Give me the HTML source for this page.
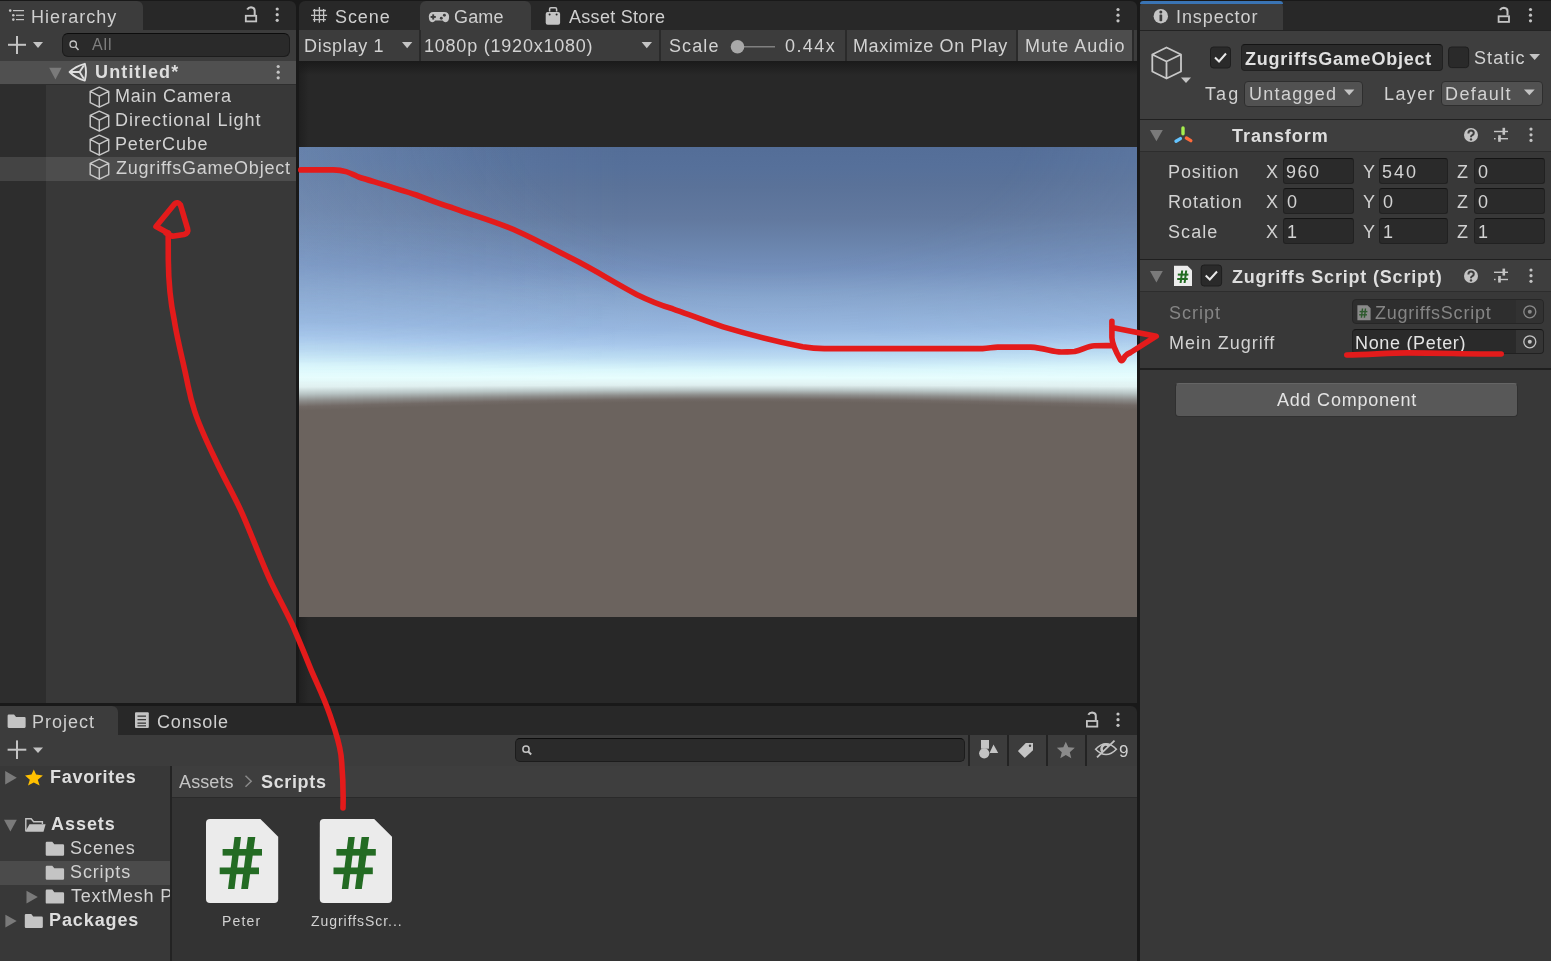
<!DOCTYPE html>
<html><head><meta charset="utf-8">
<style>
*{box-sizing:border-box;margin:0;padding:0}
html,body{width:1551px;height:961px;overflow:hidden;background:#191919;font-family:"Liberation Sans",sans-serif;color:#d2d2d2;font-size:18px}
.a{position:absolute}
.t{position:absolute;white-space:nowrap;line-height:1;will-change:transform}
.strip{position:absolute;background:#282828}
.tab{position:absolute;background:#3c3c3c}
.tb{position:absolute;background:#3c3c3c}
.fld{position:absolute;background:#2a2a2a;border:1px solid #212121;border-top-color:#141414;border-radius:3px}
.dd{position:absolute;background:#515151;border:1px solid #2e2e2e;border-radius:4px}
.sep{position:absolute;background:#2a2a2a}
</style></head><body>

<!-- ============ HIERARCHY ============ -->
<div class="strip" style="left:0;top:1px;width:296px;height:29px;border-radius:0 6px 0 0"></div>
<div class="tab" style="left:0;top:1px;width:143px;height:29px;border-radius:0 6px 0 0"></div>
<div class="tb" style="left:0;top:30px;width:296px;height:31px"></div>
<div class="fld" style="left:62px;top:33px;width:228px;height:24px;border-radius:6px;border-color:#1c1c1c;border-top-color:#0c0c0c"></div>
<div class="a" style="left:0;top:61px;width:296px;height:23px;background:#505050"></div>
<div class="a" style="left:0;top:84px;width:296px;height:619px;background:#383838"></div>
<div class="a" style="left:0;top:84px;width:46px;height:619px;background:#2d2d2d"></div>
<div class="a" style="left:0;top:83.5px;width:296px;height:1px;background:#2e2e2e"></div>
<div class="a" style="left:46px;top:157px;width:250px;height:24px;background:#4d4d4d"></div>
<div class="a" style="left:0;top:157px;width:46px;height:24px;background:#444444"></div>

<!-- ============ GAME ============ -->
<div class="strip" style="left:299px;top:1px;width:838px;height:29px;border-radius:6px 6px 0 0"></div>
<div class="tab" style="left:419.5px;top:1px;width:111.5px;height:29px;border-radius:6px 6px 0 0"></div>
<div class="tb" style="left:299px;top:30px;width:838px;height:31px"></div>
<div class="a" style="left:1018px;top:30px;width:114px;height:31px;background:#4d4d4d"></div>
<div class="sep" style="left:419px;top:30px;width:2px;height:31px"></div>
<div class="sep" style="left:659px;top:30px;width:2px;height:31px"></div>
<div class="sep" style="left:845px;top:30px;width:2px;height:31px"></div>
<div class="sep" style="left:1016px;top:30px;width:2px;height:31px"></div>
<div class="sep" style="left:1132px;top:30px;width:2px;height:31px"></div>
<div class="a" style="left:299px;top:61px;width:838px;height:642px;background:#282828"></div>
<div class="a" style="left:299px;top:61px;width:838px;height:14px;background:linear-gradient(#1a1a1a,rgba(40,40,40,0))"></div>
<div class="a" style="left:299px;top:61px;width:10px;height:642px;background:linear-gradient(to right,rgba(26,26,26,0.6),rgba(40,40,40,0))"></div>
<div class="a" style="left:299px;top:147px;width:838px;height:470px;overflow:hidden;background:#6a625d">
<div class="a" style="left:0px;top:0;width:8px;height:470px;background:linear-gradient(#536d97 -18.5px,#56709a 10.9px,#5a7299 29.7px,#62799f 64.3px,#6a84ac 90.5px,#7490bc 117.7px,#86a4cc 143.9px,#98b8e0 174.8px,#a8c8ec 189.2px,#c0e0f4 205.0px,#dcf8fc 219.0px,#e8fefe 230.2px,#e0f0f0 240.0px,#b8c4c4 247.0px,#8c8c8a 254.0px,#726a66 259.6px,#6b635e 263.8px)"></div>
<div class="a" style="left:8px;top:0;width:8px;height:470px;background:linear-gradient(#536d97 -18.1px,#56709a 11.2px,#5a7299 30.0px,#62799f 64.5px,#6a84ac 90.7px,#7490bc 117.9px,#86a4cc 144.1px,#98b8e0 175.0px,#a8c8ec 189.4px,#c0e0f4 205.2px,#dcf8fc 219.1px,#e8fefe 230.2px,#e0f0f0 239.9px,#b8c4c4 246.9px,#8c8c8a 253.8px,#726a66 259.3px,#6b635e 263.5px)"></div>
<div class="a" style="left:16px;top:0;width:8px;height:470px;background:linear-gradient(#536d97 -17.8px,#56709a 11.5px,#5a7299 30.3px,#62799f 64.8px,#6a84ac 90.9px,#7490bc 118.1px,#86a4cc 144.2px,#98b8e0 175.3px,#a8c8ec 189.7px,#c0e0f4 205.4px,#dcf8fc 219.3px,#e8fefe 230.3px,#e0f0f0 239.9px,#b8c4c4 246.7px,#8c8c8a 253.6px,#726a66 259.1px,#6b635e 263.2px)"></div>
<div class="a" style="left:24px;top:0;width:8px;height:470px;background:linear-gradient(#536d97 -17.4px,#56709a 11.8px,#5a7299 30.6px,#62799f 65.0px,#6a84ac 91.1px,#7490bc 118.2px,#86a4cc 144.3px,#98b8e0 175.5px,#a8c8ec 190.0px,#c0e0f4 205.6px,#dcf8fc 219.4px,#e8fefe 230.3px,#e0f0f0 239.8px,#b8c4c4 246.6px,#8c8c8a 253.4px,#726a66 258.9px,#6b635e 263.0px)"></div>
<div class="a" style="left:32px;top:0;width:8px;height:470px;background:linear-gradient(#536d97 -17.1px,#56709a 12.1px,#5a7299 30.9px,#62799f 65.3px,#6a84ac 91.3px,#7490bc 118.4px,#86a4cc 144.4px,#98b8e0 175.8px,#a8c8ec 190.3px,#c0e0f4 205.8px,#dcf8fc 219.5px,#e8fefe 230.3px,#e0f0f0 239.7px,#b8c4c4 246.5px,#8c8c8a 253.2px,#726a66 258.6px,#6b635e 262.7px)"></div>
<div class="a" style="left:40px;top:0;width:8px;height:470px;background:linear-gradient(#536d97 -16.7px,#56709a 12.4px,#5a7299 31.1px,#62799f 65.5px,#6a84ac 91.5px,#7490bc 118.5px,#86a4cc 144.6px,#98b8e0 176.0px,#a8c8ec 190.5px,#c0e0f4 206.1px,#dcf8fc 219.6px,#e8fefe 230.3px,#e0f0f0 239.7px,#b8c4c4 246.4px,#8c8c8a 253.1px,#726a66 258.4px,#6b635e 262.4px)"></div>
<div class="a" style="left:48px;top:0;width:8px;height:470px;background:linear-gradient(#536d97 -16.4px,#56709a 12.7px,#5a7299 31.4px,#62799f 65.7px,#6a84ac 91.7px,#7490bc 118.7px,#86a4cc 144.7px,#98b8e0 176.3px,#a8c8ec 190.8px,#c0e0f4 206.3px,#dcf8fc 219.7px,#e8fefe 230.3px,#e0f0f0 239.6px,#b8c4c4 246.3px,#8c8c8a 252.9px,#726a66 258.2px,#6b635e 262.2px)"></div>
<div class="a" style="left:56px;top:0;width:8px;height:470px;background:linear-gradient(#536d97 -16.0px,#56709a 13.0px,#5a7299 31.7px,#62799f 65.9px,#6a84ac 91.9px,#7490bc 118.9px,#86a4cc 144.8px,#98b8e0 176.5px,#a8c8ec 191.0px,#c0e0f4 206.5px,#dcf8fc 219.9px,#e8fefe 230.4px,#e0f0f0 239.6px,#b8c4c4 246.1px,#8c8c8a 252.7px,#726a66 258.0px,#6b635e 261.9px)"></div>
<div class="a" style="left:64px;top:0;width:8px;height:470px;background:linear-gradient(#536d97 -15.7px,#56709a 13.3px,#5a7299 32.0px,#62799f 66.2px,#6a84ac 92.1px,#7490bc 119.0px,#86a4cc 144.9px,#98b8e0 176.8px,#a8c8ec 191.3px,#c0e0f4 206.7px,#dcf8fc 220.0px,#e8fefe 230.4px,#e0f0f0 239.5px,#b8c4c4 246.0px,#8c8c8a 252.5px,#726a66 257.7px,#6b635e 261.6px)"></div>
<div class="a" style="left:72px;top:0;width:8px;height:470px;background:linear-gradient(#536d97 -15.4px,#56709a 13.6px,#5a7299 32.2px,#62799f 66.4px,#6a84ac 92.3px,#7490bc 119.2px,#86a4cc 145.0px,#98b8e0 177.0px,#a8c8ec 191.6px,#c0e0f4 206.9px,#dcf8fc 220.1px,#e8fefe 230.4px,#e0f0f0 239.5px,#b8c4c4 245.9px,#8c8c8a 252.4px,#726a66 257.5px,#6b635e 261.4px)"></div>
<div class="a" style="left:80px;top:0;width:8px;height:470px;background:linear-gradient(#536d97 -15.0px,#56709a 13.9px,#5a7299 32.5px,#62799f 66.6px,#6a84ac 92.4px,#7490bc 119.3px,#86a4cc 145.1px,#98b8e0 177.2px,#a8c8ec 191.8px,#c0e0f4 207.1px,#dcf8fc 220.2px,#e8fefe 230.4px,#e0f0f0 239.4px,#b8c4c4 245.8px,#8c8c8a 252.2px,#726a66 257.3px,#6b635e 261.1px)"></div>
<div class="a" style="left:88px;top:0;width:8px;height:470px;background:linear-gradient(#536d97 -14.7px,#56709a 14.2px,#5a7299 32.8px,#62799f 66.8px,#6a84ac 92.6px,#7490bc 119.5px,#86a4cc 145.3px,#98b8e0 177.5px,#a8c8ec 192.1px,#c0e0f4 207.3px,#dcf8fc 220.3px,#e8fefe 230.5px,#e0f0f0 239.3px,#b8c4c4 245.7px,#8c8c8a 252.0px,#726a66 257.1px,#6b635e 260.9px)"></div>
<div class="a" style="left:96px;top:0;width:8px;height:470px;background:linear-gradient(#536d97 -14.4px,#56709a 14.5px,#5a7299 33.0px,#62799f 67.0px,#6a84ac 92.8px,#7490bc 119.6px,#86a4cc 145.4px,#98b8e0 177.7px,#a8c8ec 192.3px,#c0e0f4 207.5px,#dcf8fc 220.4px,#e8fefe 230.5px,#e0f0f0 239.3px,#b8c4c4 245.6px,#8c8c8a 251.9px,#726a66 256.9px,#6b635e 260.7px)"></div>
<div class="a" style="left:104px;top:0;width:8px;height:470px;background:linear-gradient(#536d97 -14.1px,#56709a 14.7px,#5a7299 33.3px,#62799f 67.2px,#6a84ac 93.0px,#7490bc 119.7px,#86a4cc 145.5px,#98b8e0 177.9px,#a8c8ec 192.5px,#c0e0f4 207.7px,#dcf8fc 220.5px,#e8fefe 230.5px,#e0f0f0 239.2px,#b8c4c4 245.5px,#8c8c8a 251.7px,#726a66 256.7px,#6b635e 260.4px)"></div>
<div class="a" style="left:112px;top:0;width:8px;height:470px;background:linear-gradient(#536d97 -13.8px,#56709a 15.0px,#5a7299 33.5px,#62799f 67.4px,#6a84ac 93.1px,#7490bc 119.9px,#86a4cc 145.6px,#98b8e0 178.1px,#a8c8ec 192.8px,#c0e0f4 207.8px,#dcf8fc 220.6px,#e8fefe 230.5px,#e0f0f0 239.2px,#b8c4c4 245.4px,#8c8c8a 251.5px,#726a66 256.5px,#6b635e 260.2px)"></div>
<div class="a" style="left:120px;top:0;width:8px;height:470px;background:linear-gradient(#536d97 -13.5px,#56709a 15.3px,#5a7299 33.7px,#62799f 67.6px,#6a84ac 93.3px,#7490bc 120.0px,#86a4cc 145.7px,#98b8e0 178.3px,#a8c8ec 193.0px,#c0e0f4 208.0px,#dcf8fc 220.7px,#e8fefe 230.5px,#e0f0f0 239.1px,#b8c4c4 245.3px,#8c8c8a 251.4px,#726a66 256.3px,#6b635e 260.0px)"></div>
<div class="a" style="left:128px;top:0;width:8px;height:470px;background:linear-gradient(#536d97 -13.2px,#56709a 15.5px,#5a7299 34.0px,#62799f 67.8px,#6a84ac 93.5px,#7490bc 120.2px,#86a4cc 145.8px,#98b8e0 178.6px,#a8c8ec 193.2px,#c0e0f4 208.2px,#dcf8fc 220.8px,#e8fefe 230.6px,#e0f0f0 239.1px,#b8c4c4 245.2px,#8c8c8a 251.2px,#726a66 256.1px,#6b635e 259.7px)"></div>
<div class="a" style="left:136px;top:0;width:8px;height:470px;background:linear-gradient(#536d97 -12.9px,#56709a 15.8px,#5a7299 34.2px,#62799f 68.0px,#6a84ac 93.7px,#7490bc 120.3px,#86a4cc 145.9px,#98b8e0 178.8px,#a8c8ec 193.5px,#c0e0f4 208.4px,#dcf8fc 220.9px,#e8fefe 230.6px,#e0f0f0 239.0px,#b8c4c4 245.1px,#8c8c8a 251.1px,#726a66 255.9px,#6b635e 259.5px)"></div>
<div class="a" style="left:144px;top:0;width:8px;height:470px;background:linear-gradient(#536d97 -12.6px,#56709a 16.0px,#5a7299 34.5px,#62799f 68.2px,#6a84ac 93.8px,#7490bc 120.4px,#86a4cc 146.0px,#98b8e0 179.0px,#a8c8ec 193.7px,#c0e0f4 208.6px,#dcf8fc 221.0px,#e8fefe 230.6px,#e0f0f0 239.0px,#b8c4c4 245.0px,#8c8c8a 250.9px,#726a66 255.7px,#6b635e 259.3px)"></div>
<div class="a" style="left:152px;top:0;width:8px;height:470px;background:linear-gradient(#536d97 -12.3px,#56709a 16.3px,#5a7299 34.7px,#62799f 68.4px,#6a84ac 94.0px,#7490bc 120.6px,#86a4cc 146.1px,#98b8e0 179.2px,#a8c8ec 193.9px,#c0e0f4 208.7px,#dcf8fc 221.1px,#e8fefe 230.6px,#e0f0f0 238.9px,#b8c4c4 244.9px,#8c8c8a 250.8px,#726a66 255.5px,#6b635e 259.1px)"></div>
<div class="a" style="left:160px;top:0;width:8px;height:470px;background:linear-gradient(#536d97 -12.1px,#56709a 16.5px,#5a7299 34.9px,#62799f 68.6px,#6a84ac 94.1px,#7490bc 120.7px,#86a4cc 146.2px,#98b8e0 179.4px,#a8c8ec 194.1px,#c0e0f4 208.9px,#dcf8fc 221.2px,#e8fefe 230.6px,#e0f0f0 238.9px,#b8c4c4 244.8px,#8c8c8a 250.6px,#726a66 255.3px,#6b635e 258.9px)"></div>
<div class="a" style="left:168px;top:0;width:8px;height:470px;background:linear-gradient(#536d97 -11.8px,#56709a 16.8px,#5a7299 35.1px,#62799f 68.8px,#6a84ac 94.3px,#7490bc 120.8px,#86a4cc 146.3px,#98b8e0 179.6px,#a8c8ec 194.3px,#c0e0f4 209.1px,#dcf8fc 221.3px,#e8fefe 230.7px,#e0f0f0 238.8px,#b8c4c4 244.7px,#8c8c8a 250.5px,#726a66 255.2px,#6b635e 258.7px)"></div>
<div class="a" style="left:176px;top:0;width:8px;height:470px;background:linear-gradient(#536d97 -11.5px,#56709a 17.0px,#5a7299 35.3px,#62799f 69.0px,#6a84ac 94.4px,#7490bc 120.9px,#86a4cc 146.4px,#98b8e0 179.7px,#a8c8ec 194.5px,#c0e0f4 209.2px,#dcf8fc 221.4px,#e8fefe 230.7px,#e0f0f0 238.8px,#b8c4c4 244.6px,#8c8c8a 250.4px,#726a66 255.0px,#6b635e 258.5px)"></div>
<div class="a" style="left:184px;top:0;width:8px;height:470px;background:linear-gradient(#536d97 -11.3px,#56709a 17.2px,#5a7299 35.5px,#62799f 69.1px,#6a84ac 94.6px,#7490bc 121.0px,#86a4cc 146.5px,#98b8e0 179.9px,#a8c8ec 194.7px,#c0e0f4 209.4px,#dcf8fc 221.5px,#e8fefe 230.7px,#e0f0f0 238.7px,#b8c4c4 244.5px,#8c8c8a 250.2px,#726a66 254.8px,#6b635e 258.3px)"></div>
<div class="a" style="left:192px;top:0;width:8px;height:470px;background:linear-gradient(#536d97 -11.0px,#56709a 17.4px,#5a7299 35.7px,#62799f 69.3px,#6a84ac 94.7px,#7490bc 121.2px,#86a4cc 146.6px,#98b8e0 180.1px,#a8c8ec 194.9px,#c0e0f4 209.5px,#dcf8fc 221.6px,#e8fefe 230.7px,#e0f0f0 238.7px,#b8c4c4 244.4px,#8c8c8a 250.1px,#726a66 254.7px,#6b635e 258.1px)"></div>
<div class="a" style="left:200px;top:0;width:8px;height:470px;background:linear-gradient(#536d97 -10.8px,#56709a 17.7px,#5a7299 35.9px,#62799f 69.5px,#6a84ac 94.9px,#7490bc 121.3px,#86a4cc 146.7px,#98b8e0 180.3px,#a8c8ec 195.1px,#c0e0f4 209.7px,#dcf8fc 221.7px,#e8fefe 230.7px,#e0f0f0 238.7px,#b8c4c4 244.3px,#8c8c8a 250.0px,#726a66 254.5px,#6b635e 257.9px)"></div>
<div class="a" style="left:208px;top:0;width:8px;height:470px;background:linear-gradient(#536d97 -10.5px,#56709a 17.9px,#5a7299 36.1px,#62799f 69.6px,#6a84ac 95.0px,#7490bc 121.4px,#86a4cc 146.7px,#98b8e0 180.5px,#a8c8ec 195.3px,#c0e0f4 209.8px,#dcf8fc 221.8px,#e8fefe 230.8px,#e0f0f0 238.6px,#b8c4c4 244.2px,#8c8c8a 249.8px,#726a66 254.3px,#6b635e 257.7px)"></div>
<div class="a" style="left:216px;top:0;width:8px;height:470px;background:linear-gradient(#536d97 -10.3px,#56709a 18.1px,#5a7299 36.3px,#62799f 69.8px,#6a84ac 95.1px,#7490bc 121.5px,#86a4cc 146.8px,#98b8e0 180.6px,#a8c8ec 195.4px,#c0e0f4 210.0px,#dcf8fc 221.8px,#e8fefe 230.8px,#e0f0f0 238.6px,#b8c4c4 244.2px,#8c8c8a 249.7px,#726a66 254.2px,#6b635e 257.5px)"></div>
<div class="a" style="left:224px;top:0;width:8px;height:470px;background:linear-gradient(#536d97 -10.1px,#56709a 18.3px,#5a7299 36.5px,#62799f 69.9px,#6a84ac 95.3px,#7490bc 121.6px,#86a4cc 146.9px,#98b8e0 180.8px,#a8c8ec 195.6px,#c0e0f4 210.1px,#dcf8fc 221.9px,#e8fefe 230.8px,#e0f0f0 238.5px,#b8c4c4 244.1px,#8c8c8a 249.6px,#726a66 254.0px,#6b635e 257.4px)"></div>
<div class="a" style="left:232px;top:0;width:8px;height:470px;background:linear-gradient(#536d97 -9.9px,#56709a 18.5px,#5a7299 36.7px,#62799f 70.1px,#6a84ac 95.4px,#7490bc 121.7px,#86a4cc 147.0px,#98b8e0 180.9px,#a8c8ec 195.8px,#c0e0f4 210.2px,#dcf8fc 222.0px,#e8fefe 230.8px,#e0f0f0 238.5px,#b8c4c4 244.0px,#8c8c8a 249.5px,#726a66 253.9px,#6b635e 257.2px)"></div>
<div class="a" style="left:240px;top:0;width:8px;height:470px;background:linear-gradient(#536d97 -9.7px,#56709a 18.7px,#5a7299 36.9px,#62799f 70.2px,#6a84ac 95.5px,#7490bc 121.8px,#86a4cc 147.1px,#98b8e0 181.1px,#a8c8ec 196.0px,#c0e0f4 210.4px,#dcf8fc 222.1px,#e8fefe 230.8px,#e0f0f0 238.5px,#b8c4c4 243.9px,#8c8c8a 249.4px,#726a66 253.8px,#6b635e 257.0px)"></div>
<div class="a" style="left:248px;top:0;width:8px;height:470px;background:linear-gradient(#536d97 -9.5px,#56709a 18.8px,#5a7299 37.0px,#62799f 70.4px,#6a84ac 95.6px,#7490bc 121.9px,#86a4cc 147.1px,#98b8e0 181.2px,#a8c8ec 196.1px,#c0e0f4 210.5px,#dcf8fc 222.1px,#e8fefe 230.8px,#e0f0f0 238.4px,#b8c4c4 243.9px,#8c8c8a 249.3px,#726a66 253.6px,#6b635e 256.9px)"></div>
<div class="a" style="left:256px;top:0;width:8px;height:470px;background:linear-gradient(#536d97 -9.3px,#56709a 19.0px,#5a7299 37.2px,#62799f 70.5px,#6a84ac 95.7px,#7490bc 122.0px,#86a4cc 147.2px,#98b8e0 181.4px,#a8c8ec 196.3px,#c0e0f4 210.6px,#dcf8fc 222.2px,#e8fefe 230.8px,#e0f0f0 238.4px,#b8c4c4 243.8px,#8c8c8a 249.2px,#726a66 253.5px,#6b635e 256.7px)"></div>
<div class="a" style="left:264px;top:0;width:8px;height:470px;background:linear-gradient(#536d97 -9.1px,#56709a 19.2px,#5a7299 37.3px,#62799f 70.6px,#6a84ac 95.8px,#7490bc 122.1px,#86a4cc 147.3px,#98b8e0 181.5px,#a8c8ec 196.4px,#c0e0f4 210.7px,#dcf8fc 222.3px,#e8fefe 230.9px,#e0f0f0 238.4px,#b8c4c4 243.7px,#8c8c8a 249.1px,#726a66 253.4px,#6b635e 256.6px)"></div>
<div class="a" style="left:272px;top:0;width:8px;height:470px;background:linear-gradient(#536d97 -8.9px,#56709a 19.3px,#5a7299 37.5px,#62799f 70.7px,#6a84ac 95.9px,#7490bc 122.1px,#86a4cc 147.3px,#98b8e0 181.6px,#a8c8ec 196.5px,#c0e0f4 210.8px,#dcf8fc 222.3px,#e8fefe 230.9px,#e0f0f0 238.3px,#b8c4c4 243.7px,#8c8c8a 249.0px,#726a66 253.2px,#6b635e 256.4px)"></div>
<div class="a" style="left:280px;top:0;width:8px;height:470px;background:linear-gradient(#536d97 -8.7px,#56709a 19.5px,#5a7299 37.6px,#62799f 70.9px,#6a84ac 96.0px,#7490bc 122.2px,#86a4cc 147.4px,#98b8e0 181.8px,#a8c8ec 196.7px,#c0e0f4 211.0px,#dcf8fc 222.4px,#e8fefe 230.9px,#e0f0f0 238.3px,#b8c4c4 243.6px,#8c8c8a 248.9px,#726a66 253.1px,#6b635e 256.3px)"></div>
<div class="a" style="left:288px;top:0;width:8px;height:470px;background:linear-gradient(#536d97 -8.5px,#56709a 19.6px,#5a7299 37.8px,#62799f 71.0px,#6a84ac 96.1px,#7490bc 122.3px,#86a4cc 147.5px,#98b8e0 181.9px,#a8c8ec 196.8px,#c0e0f4 211.1px,#dcf8fc 222.5px,#e8fefe 230.9px,#e0f0f0 238.3px,#b8c4c4 243.5px,#8c8c8a 248.8px,#726a66 253.0px,#6b635e 256.2px)"></div>
<div class="a" style="left:296px;top:0;width:8px;height:470px;background:linear-gradient(#536d97 -8.4px,#56709a 19.8px,#5a7299 37.9px,#62799f 71.1px,#6a84ac 96.2px,#7490bc 122.4px,#86a4cc 147.5px,#98b8e0 182.0px,#a8c8ec 196.9px,#c0e0f4 211.2px,#dcf8fc 222.5px,#e8fefe 230.9px,#e0f0f0 238.2px,#b8c4c4 243.5px,#8c8c8a 248.7px,#726a66 252.9px,#6b635e 256.1px)"></div>
<div class="a" style="left:304px;top:0;width:8px;height:470px;background:linear-gradient(#536d97 -8.2px,#56709a 19.9px,#5a7299 38.0px,#62799f 71.2px,#6a84ac 96.3px,#7490bc 122.4px,#86a4cc 147.6px,#98b8e0 182.1px,#a8c8ec 197.0px,#c0e0f4 211.2px,#dcf8fc 222.6px,#e8fefe 230.9px,#e0f0f0 238.2px,#b8c4c4 243.4px,#8c8c8a 248.6px,#726a66 252.8px,#6b635e 255.9px)"></div>
<div class="a" style="left:312px;top:0;width:8px;height:470px;background:linear-gradient(#536d97 -8.1px,#56709a 20.0px,#5a7299 38.1px,#62799f 71.3px,#6a84ac 96.4px,#7490bc 122.5px,#86a4cc 147.6px,#98b8e0 182.2px,#a8c8ec 197.2px,#c0e0f4 211.3px,#dcf8fc 222.6px,#e8fefe 230.9px,#e0f0f0 238.2px,#b8c4c4 243.4px,#8c8c8a 248.6px,#726a66 252.7px,#6b635e 255.8px)"></div>
<div class="a" style="left:320px;top:0;width:8px;height:470px;background:linear-gradient(#536d97 -8.0px,#56709a 20.2px,#5a7299 38.2px,#62799f 71.4px,#6a84ac 96.5px,#7490bc 122.6px,#86a4cc 147.7px,#98b8e0 182.3px,#a8c8ec 197.3px,#c0e0f4 211.4px,#dcf8fc 222.7px,#e8fefe 230.9px,#e0f0f0 238.2px,#b8c4c4 243.3px,#8c8c8a 248.5px,#726a66 252.6px,#6b635e 255.7px)"></div>
<div class="a" style="left:328px;top:0;width:8px;height:470px;background:linear-gradient(#536d97 -7.8px,#56709a 20.3px,#5a7299 38.3px,#62799f 71.4px,#6a84ac 96.5px,#7490bc 122.6px,#86a4cc 147.7px,#98b8e0 182.4px,#a8c8ec 197.4px,#c0e0f4 211.5px,#dcf8fc 222.7px,#e8fefe 230.9px,#e0f0f0 238.1px,#b8c4c4 243.3px,#8c8c8a 248.4px,#726a66 252.5px,#6b635e 255.6px)"></div>
<div class="a" style="left:336px;top:0;width:8px;height:470px;background:linear-gradient(#536d97 -7.7px,#56709a 20.4px,#5a7299 38.4px,#62799f 71.5px,#6a84ac 96.6px,#7490bc 122.7px,#86a4cc 147.7px,#98b8e0 182.5px,#a8c8ec 197.4px,#c0e0f4 211.6px,#dcf8fc 222.8px,#e8fefe 231.0px,#e0f0f0 238.1px,#b8c4c4 243.2px,#8c8c8a 248.4px,#726a66 252.5px,#6b635e 255.5px)"></div>
<div class="a" style="left:344px;top:0;width:8px;height:470px;background:linear-gradient(#536d97 -7.6px,#56709a 20.5px,#5a7299 38.5px,#62799f 71.6px,#6a84ac 96.7px,#7490bc 122.7px,#86a4cc 147.8px,#98b8e0 182.6px,#a8c8ec 197.5px,#c0e0f4 211.6px,#dcf8fc 222.8px,#e8fefe 231.0px,#e0f0f0 238.1px,#b8c4c4 243.2px,#8c8c8a 248.3px,#726a66 252.4px,#6b635e 255.5px)"></div>
<div class="a" style="left:352px;top:0;width:8px;height:470px;background:linear-gradient(#536d97 -7.5px,#56709a 20.6px,#5a7299 38.6px,#62799f 71.7px,#6a84ac 96.7px,#7490bc 122.8px,#86a4cc 147.8px,#98b8e0 182.6px,#a8c8ec 197.6px,#c0e0f4 211.7px,#dcf8fc 222.8px,#e8fefe 231.0px,#e0f0f0 238.1px,#b8c4c4 243.2px,#8c8c8a 248.3px,#726a66 252.3px,#6b635e 255.4px)"></div>
<div class="a" style="left:360px;top:0;width:8px;height:470px;background:linear-gradient(#536d97 -7.4px,#56709a 20.6px,#5a7299 38.7px,#62799f 71.7px,#6a84ac 96.8px,#7490bc 122.8px,#86a4cc 147.9px,#98b8e0 182.7px,#a8c8ec 197.7px,#c0e0f4 211.7px,#dcf8fc 222.9px,#e8fefe 231.0px,#e0f0f0 238.1px,#b8c4c4 243.1px,#8c8c8a 248.2px,#726a66 252.3px,#6b635e 255.3px)"></div>
<div class="a" style="left:368px;top:0;width:8px;height:470px;background:linear-gradient(#536d97 -7.3px,#56709a 20.7px,#5a7299 38.7px,#62799f 71.8px,#6a84ac 96.8px,#7490bc 122.8px,#86a4cc 147.9px,#98b8e0 182.8px,#a8c8ec 197.7px,#c0e0f4 211.8px,#dcf8fc 222.9px,#e8fefe 231.0px,#e0f0f0 238.1px,#b8c4c4 243.1px,#8c8c8a 248.2px,#726a66 252.2px,#6b635e 255.3px)"></div>
<div class="a" style="left:376px;top:0;width:8px;height:470px;background:linear-gradient(#536d97 -7.3px,#56709a 20.8px,#5a7299 38.8px,#62799f 71.8px,#6a84ac 96.9px,#7490bc 122.9px,#86a4cc 147.9px,#98b8e0 182.8px,#a8c8ec 197.8px,#c0e0f4 211.8px,#dcf8fc 222.9px,#e8fefe 231.0px,#e0f0f0 238.0px,#b8c4c4 243.1px,#8c8c8a 248.1px,#726a66 252.2px,#6b635e 255.2px)"></div>
<div class="a" style="left:384px;top:0;width:8px;height:470px;background:linear-gradient(#536d97 -7.2px,#56709a 20.8px,#5a7299 38.8px,#62799f 71.9px,#6a84ac 96.9px,#7490bc 122.9px,#86a4cc 147.9px,#98b8e0 182.9px,#a8c8ec 197.8px,#c0e0f4 211.9px,#dcf8fc 222.9px,#e8fefe 231.0px,#e0f0f0 238.0px,#b8c4c4 243.1px,#8c8c8a 248.1px,#726a66 252.1px,#6b635e 255.1px)"></div>
<div class="a" style="left:392px;top:0;width:8px;height:470px;background:linear-gradient(#536d97 -7.1px,#56709a 20.9px,#5a7299 38.9px,#62799f 71.9px,#6a84ac 96.9px,#7490bc 122.9px,#86a4cc 148.0px,#98b8e0 182.9px,#a8c8ec 197.9px,#c0e0f4 211.9px,#dcf8fc 223.0px,#e8fefe 231.0px,#e0f0f0 238.0px,#b8c4c4 243.0px,#8c8c8a 248.1px,#726a66 252.1px,#6b635e 255.1px)"></div>
<div class="a" style="left:400px;top:0;width:8px;height:470px;background:linear-gradient(#536d97 -7.1px,#56709a 20.9px,#5a7299 38.9px,#62799f 71.9px,#6a84ac 96.9px,#7490bc 123.0px,#86a4cc 148.0px,#98b8e0 182.9px,#a8c8ec 197.9px,#c0e0f4 211.9px,#dcf8fc 223.0px,#e8fefe 231.0px,#e0f0f0 238.0px,#b8c4c4 243.0px,#8c8c8a 248.0px,#726a66 252.1px,#6b635e 255.1px)"></div>
<div class="a" style="left:408px;top:0;width:8px;height:470px;background:linear-gradient(#536d97 -7.1px,#56709a 20.9px,#5a7299 39.0px,#62799f 72.0px,#6a84ac 97.0px,#7490bc 123.0px,#86a4cc 148.0px,#98b8e0 183.0px,#a8c8ec 198.0px,#c0e0f4 212.0px,#dcf8fc 223.0px,#e8fefe 231.0px,#e0f0f0 238.0px,#b8c4c4 243.0px,#8c8c8a 248.0px,#726a66 252.0px,#6b635e 255.0px)"></div>
<div class="a" style="left:416px;top:0;width:8px;height:470px;background:linear-gradient(#536d97 -7.0px,#56709a 21.0px,#5a7299 39.0px,#62799f 72.0px,#6a84ac 97.0px,#7490bc 123.0px,#86a4cc 148.0px,#98b8e0 183.0px,#a8c8ec 198.0px,#c0e0f4 212.0px,#dcf8fc 223.0px,#e8fefe 231.0px,#e0f0f0 238.0px,#b8c4c4 243.0px,#8c8c8a 248.0px,#726a66 252.0px,#6b635e 255.0px)"></div>
<div class="a" style="left:424px;top:0;width:8px;height:470px;background:linear-gradient(#536d97 -7.0px,#56709a 21.0px,#5a7299 39.0px,#62799f 72.0px,#6a84ac 97.0px,#7490bc 123.0px,#86a4cc 148.0px,#98b8e0 183.0px,#a8c8ec 198.0px,#c0e0f4 212.0px,#dcf8fc 223.0px,#e8fefe 231.0px,#e0f0f0 238.0px,#b8c4c4 243.0px,#8c8c8a 248.0px,#726a66 252.0px,#6b635e 255.0px)"></div>
<div class="a" style="left:432px;top:0;width:8px;height:470px;background:linear-gradient(#536d97 -7.0px,#56709a 21.0px,#5a7299 39.0px,#62799f 72.0px,#6a84ac 97.0px,#7490bc 123.0px,#86a4cc 148.0px,#98b8e0 183.0px,#a8c8ec 198.0px,#c0e0f4 212.0px,#dcf8fc 223.0px,#e8fefe 231.0px,#e0f0f0 238.0px,#b8c4c4 243.0px,#8c8c8a 248.0px,#726a66 252.0px,#6b635e 255.0px)"></div>
<div class="a" style="left:440px;top:0;width:8px;height:470px;background:linear-gradient(#536d97 -7.0px,#56709a 21.0px,#5a7299 39.0px,#62799f 72.0px,#6a84ac 97.0px,#7490bc 123.0px,#86a4cc 148.0px,#98b8e0 183.0px,#a8c8ec 198.0px,#c0e0f4 212.0px,#dcf8fc 223.0px,#e8fefe 231.0px,#e0f0f0 238.0px,#b8c4c4 243.0px,#8c8c8a 248.0px,#726a66 252.0px,#6b635e 255.0px)"></div>
<div class="a" style="left:448px;top:0;width:8px;height:470px;background:linear-gradient(#536d97 -7.0px,#56709a 21.0px,#5a7299 39.0px,#62799f 72.0px,#6a84ac 97.0px,#7490bc 123.0px,#86a4cc 148.0px,#98b8e0 183.0px,#a8c8ec 198.0px,#c0e0f4 212.0px,#dcf8fc 223.0px,#e8fefe 231.0px,#e0f0f0 238.0px,#b8c4c4 243.0px,#8c8c8a 248.0px,#726a66 252.0px,#6b635e 255.0px)"></div>
<div class="a" style="left:456px;top:0;width:8px;height:470px;background:linear-gradient(#536d97 -7.0px,#56709a 21.0px,#5a7299 39.0px,#62799f 72.0px,#6a84ac 97.0px,#7490bc 123.0px,#86a4cc 148.0px,#98b8e0 183.0px,#a8c8ec 198.0px,#c0e0f4 212.0px,#dcf8fc 223.0px,#e8fefe 231.0px,#e0f0f0 238.0px,#b8c4c4 243.0px,#8c8c8a 248.0px,#726a66 252.0px,#6b635e 255.0px)"></div>
<div class="a" style="left:464px;top:0;width:8px;height:470px;background:linear-gradient(#536d97 -7.1px,#56709a 20.9px,#5a7299 39.0px,#62799f 72.0px,#6a84ac 97.0px,#7490bc 123.0px,#86a4cc 148.0px,#98b8e0 183.0px,#a8c8ec 198.0px,#c0e0f4 212.0px,#dcf8fc 223.0px,#e8fefe 231.0px,#e0f0f0 238.0px,#b8c4c4 243.0px,#8c8c8a 248.0px,#726a66 252.0px,#6b635e 255.0px)"></div>
<div class="a" style="left:472px;top:0;width:8px;height:470px;background:linear-gradient(#536d97 -7.1px,#56709a 20.9px,#5a7299 38.9px,#62799f 71.9px,#6a84ac 96.9px,#7490bc 123.0px,#86a4cc 148.0px,#98b8e0 182.9px,#a8c8ec 197.9px,#c0e0f4 211.9px,#dcf8fc 223.0px,#e8fefe 231.0px,#e0f0f0 238.0px,#b8c4c4 243.0px,#8c8c8a 248.0px,#726a66 252.1px,#6b635e 255.1px)"></div>
<div class="a" style="left:480px;top:0;width:8px;height:470px;background:linear-gradient(#536d97 -7.1px,#56709a 20.9px,#5a7299 38.9px,#62799f 71.9px,#6a84ac 96.9px,#7490bc 122.9px,#86a4cc 148.0px,#98b8e0 182.9px,#a8c8ec 197.9px,#c0e0f4 211.9px,#dcf8fc 223.0px,#e8fefe 231.0px,#e0f0f0 238.0px,#b8c4c4 243.0px,#8c8c8a 248.1px,#726a66 252.1px,#6b635e 255.1px)"></div>
<div class="a" style="left:488px;top:0;width:8px;height:470px;background:linear-gradient(#536d97 -7.2px,#56709a 20.8px,#5a7299 38.8px,#62799f 71.9px,#6a84ac 96.9px,#7490bc 122.9px,#86a4cc 147.9px,#98b8e0 182.9px,#a8c8ec 197.8px,#c0e0f4 211.9px,#dcf8fc 222.9px,#e8fefe 231.0px,#e0f0f0 238.0px,#b8c4c4 243.1px,#8c8c8a 248.1px,#726a66 252.1px,#6b635e 255.1px)"></div>
<div class="a" style="left:496px;top:0;width:8px;height:470px;background:linear-gradient(#536d97 -7.3px,#56709a 20.8px,#5a7299 38.8px,#62799f 71.8px,#6a84ac 96.9px,#7490bc 122.9px,#86a4cc 147.9px,#98b8e0 182.8px,#a8c8ec 197.8px,#c0e0f4 211.8px,#dcf8fc 222.9px,#e8fefe 231.0px,#e0f0f0 238.0px,#b8c4c4 243.1px,#8c8c8a 248.1px,#726a66 252.2px,#6b635e 255.2px)"></div>
<div class="a" style="left:504px;top:0;width:8px;height:470px;background:linear-gradient(#536d97 -7.3px,#56709a 20.7px,#5a7299 38.7px,#62799f 71.8px,#6a84ac 96.8px,#7490bc 122.8px,#86a4cc 147.9px,#98b8e0 182.8px,#a8c8ec 197.7px,#c0e0f4 211.8px,#dcf8fc 222.9px,#e8fefe 231.0px,#e0f0f0 238.1px,#b8c4c4 243.1px,#8c8c8a 248.2px,#726a66 252.2px,#6b635e 255.3px)"></div>
<div class="a" style="left:512px;top:0;width:8px;height:470px;background:linear-gradient(#536d97 -7.4px,#56709a 20.6px,#5a7299 38.7px,#62799f 71.7px,#6a84ac 96.8px,#7490bc 122.8px,#86a4cc 147.9px,#98b8e0 182.7px,#a8c8ec 197.7px,#c0e0f4 211.7px,#dcf8fc 222.9px,#e8fefe 231.0px,#e0f0f0 238.1px,#b8c4c4 243.1px,#8c8c8a 248.2px,#726a66 252.3px,#6b635e 255.3px)"></div>
<div class="a" style="left:520px;top:0;width:8px;height:470px;background:linear-gradient(#536d97 -7.5px,#56709a 20.6px,#5a7299 38.6px,#62799f 71.7px,#6a84ac 96.7px,#7490bc 122.8px,#86a4cc 147.8px,#98b8e0 182.6px,#a8c8ec 197.6px,#c0e0f4 211.7px,#dcf8fc 222.8px,#e8fefe 231.0px,#e0f0f0 238.1px,#b8c4c4 243.2px,#8c8c8a 248.3px,#726a66 252.3px,#6b635e 255.4px)"></div>
<div class="a" style="left:528px;top:0;width:8px;height:470px;background:linear-gradient(#536d97 -7.6px,#56709a 20.5px,#5a7299 38.5px,#62799f 71.6px,#6a84ac 96.7px,#7490bc 122.7px,#86a4cc 147.8px,#98b8e0 182.6px,#a8c8ec 197.5px,#c0e0f4 211.6px,#dcf8fc 222.8px,#e8fefe 231.0px,#e0f0f0 238.1px,#b8c4c4 243.2px,#8c8c8a 248.3px,#726a66 252.4px,#6b635e 255.5px)"></div>
<div class="a" style="left:536px;top:0;width:8px;height:470px;background:linear-gradient(#536d97 -7.7px,#56709a 20.4px,#5a7299 38.4px,#62799f 71.5px,#6a84ac 96.6px,#7490bc 122.7px,#86a4cc 147.7px,#98b8e0 182.5px,#a8c8ec 197.4px,#c0e0f4 211.6px,#dcf8fc 222.8px,#e8fefe 231.0px,#e0f0f0 238.1px,#b8c4c4 243.2px,#8c8c8a 248.4px,#726a66 252.5px,#6b635e 255.5px)"></div>
<div class="a" style="left:544px;top:0;width:8px;height:470px;background:linear-gradient(#536d97 -7.8px,#56709a 20.3px,#5a7299 38.3px,#62799f 71.4px,#6a84ac 96.5px,#7490bc 122.6px,#86a4cc 147.7px,#98b8e0 182.4px,#a8c8ec 197.4px,#c0e0f4 211.5px,#dcf8fc 222.7px,#e8fefe 230.9px,#e0f0f0 238.1px,#b8c4c4 243.3px,#8c8c8a 248.4px,#726a66 252.5px,#6b635e 255.6px)"></div>
<div class="a" style="left:552px;top:0;width:8px;height:470px;background:linear-gradient(#536d97 -8.0px,#56709a 20.2px,#5a7299 38.2px,#62799f 71.4px,#6a84ac 96.5px,#7490bc 122.6px,#86a4cc 147.7px,#98b8e0 182.3px,#a8c8ec 197.3px,#c0e0f4 211.4px,#dcf8fc 222.7px,#e8fefe 230.9px,#e0f0f0 238.2px,#b8c4c4 243.3px,#8c8c8a 248.5px,#726a66 252.6px,#6b635e 255.7px)"></div>
<div class="a" style="left:560px;top:0;width:8px;height:470px;background:linear-gradient(#536d97 -8.1px,#56709a 20.0px,#5a7299 38.1px,#62799f 71.3px,#6a84ac 96.4px,#7490bc 122.5px,#86a4cc 147.6px,#98b8e0 182.2px,#a8c8ec 197.2px,#c0e0f4 211.3px,#dcf8fc 222.6px,#e8fefe 230.9px,#e0f0f0 238.2px,#b8c4c4 243.4px,#8c8c8a 248.6px,#726a66 252.7px,#6b635e 255.8px)"></div>
<div class="a" style="left:568px;top:0;width:8px;height:470px;background:linear-gradient(#536d97 -8.2px,#56709a 19.9px,#5a7299 38.0px,#62799f 71.2px,#6a84ac 96.3px,#7490bc 122.4px,#86a4cc 147.6px,#98b8e0 182.1px,#a8c8ec 197.0px,#c0e0f4 211.2px,#dcf8fc 222.6px,#e8fefe 230.9px,#e0f0f0 238.2px,#b8c4c4 243.4px,#8c8c8a 248.6px,#726a66 252.8px,#6b635e 255.9px)"></div>
<div class="a" style="left:576px;top:0;width:8px;height:470px;background:linear-gradient(#536d97 -8.4px,#56709a 19.8px,#5a7299 37.9px,#62799f 71.1px,#6a84ac 96.2px,#7490bc 122.4px,#86a4cc 147.5px,#98b8e0 182.0px,#a8c8ec 196.9px,#c0e0f4 211.2px,#dcf8fc 222.5px,#e8fefe 230.9px,#e0f0f0 238.2px,#b8c4c4 243.5px,#8c8c8a 248.7px,#726a66 252.9px,#6b635e 256.1px)"></div>
<div class="a" style="left:584px;top:0;width:8px;height:470px;background:linear-gradient(#536d97 -8.5px,#56709a 19.6px,#5a7299 37.8px,#62799f 71.0px,#6a84ac 96.1px,#7490bc 122.3px,#86a4cc 147.5px,#98b8e0 181.9px,#a8c8ec 196.8px,#c0e0f4 211.1px,#dcf8fc 222.5px,#e8fefe 230.9px,#e0f0f0 238.3px,#b8c4c4 243.5px,#8c8c8a 248.8px,#726a66 253.0px,#6b635e 256.2px)"></div>
<div class="a" style="left:592px;top:0;width:8px;height:470px;background:linear-gradient(#536d97 -8.7px,#56709a 19.5px,#5a7299 37.6px,#62799f 70.9px,#6a84ac 96.0px,#7490bc 122.2px,#86a4cc 147.4px,#98b8e0 181.8px,#a8c8ec 196.7px,#c0e0f4 211.0px,#dcf8fc 222.4px,#e8fefe 230.9px,#e0f0f0 238.3px,#b8c4c4 243.6px,#8c8c8a 248.9px,#726a66 253.1px,#6b635e 256.3px)"></div>
<div class="a" style="left:600px;top:0;width:8px;height:470px;background:linear-gradient(#536d97 -8.9px,#56709a 19.3px,#5a7299 37.5px,#62799f 70.7px,#6a84ac 95.9px,#7490bc 122.1px,#86a4cc 147.3px,#98b8e0 181.6px,#a8c8ec 196.5px,#c0e0f4 210.8px,#dcf8fc 222.3px,#e8fefe 230.9px,#e0f0f0 238.3px,#b8c4c4 243.7px,#8c8c8a 249.0px,#726a66 253.2px,#6b635e 256.4px)"></div>
<div class="a" style="left:608px;top:0;width:8px;height:470px;background:linear-gradient(#536d97 -9.1px,#56709a 19.2px,#5a7299 37.3px,#62799f 70.6px,#6a84ac 95.8px,#7490bc 122.1px,#86a4cc 147.3px,#98b8e0 181.5px,#a8c8ec 196.4px,#c0e0f4 210.7px,#dcf8fc 222.3px,#e8fefe 230.9px,#e0f0f0 238.4px,#b8c4c4 243.7px,#8c8c8a 249.1px,#726a66 253.4px,#6b635e 256.6px)"></div>
<div class="a" style="left:616px;top:0;width:8px;height:470px;background:linear-gradient(#536d97 -9.3px,#56709a 19.0px,#5a7299 37.2px,#62799f 70.5px,#6a84ac 95.7px,#7490bc 122.0px,#86a4cc 147.2px,#98b8e0 181.4px,#a8c8ec 196.3px,#c0e0f4 210.6px,#dcf8fc 222.2px,#e8fefe 230.8px,#e0f0f0 238.4px,#b8c4c4 243.8px,#8c8c8a 249.2px,#726a66 253.5px,#6b635e 256.7px)"></div>
<div class="a" style="left:624px;top:0;width:8px;height:470px;background:linear-gradient(#536d97 -9.5px,#56709a 18.8px,#5a7299 37.0px,#62799f 70.4px,#6a84ac 95.6px,#7490bc 121.9px,#86a4cc 147.1px,#98b8e0 181.2px,#a8c8ec 196.1px,#c0e0f4 210.5px,#dcf8fc 222.1px,#e8fefe 230.8px,#e0f0f0 238.4px,#b8c4c4 243.9px,#8c8c8a 249.3px,#726a66 253.6px,#6b635e 256.9px)"></div>
<div class="a" style="left:632px;top:0;width:8px;height:470px;background:linear-gradient(#536d97 -9.7px,#56709a 18.7px,#5a7299 36.9px,#62799f 70.2px,#6a84ac 95.5px,#7490bc 121.8px,#86a4cc 147.1px,#98b8e0 181.1px,#a8c8ec 196.0px,#c0e0f4 210.4px,#dcf8fc 222.1px,#e8fefe 230.8px,#e0f0f0 238.5px,#b8c4c4 243.9px,#8c8c8a 249.4px,#726a66 253.8px,#6b635e 257.0px)"></div>
<div class="a" style="left:640px;top:0;width:8px;height:470px;background:linear-gradient(#536d97 -9.9px,#56709a 18.5px,#5a7299 36.7px,#62799f 70.1px,#6a84ac 95.4px,#7490bc 121.7px,#86a4cc 147.0px,#98b8e0 180.9px,#a8c8ec 195.8px,#c0e0f4 210.2px,#dcf8fc 222.0px,#e8fefe 230.8px,#e0f0f0 238.5px,#b8c4c4 244.0px,#8c8c8a 249.5px,#726a66 253.9px,#6b635e 257.2px)"></div>
<div class="a" style="left:648px;top:0;width:8px;height:470px;background:linear-gradient(#536d97 -10.1px,#56709a 18.3px,#5a7299 36.5px,#62799f 69.9px,#6a84ac 95.3px,#7490bc 121.6px,#86a4cc 146.9px,#98b8e0 180.8px,#a8c8ec 195.6px,#c0e0f4 210.1px,#dcf8fc 221.9px,#e8fefe 230.8px,#e0f0f0 238.5px,#b8c4c4 244.1px,#8c8c8a 249.6px,#726a66 254.0px,#6b635e 257.4px)"></div>
<div class="a" style="left:656px;top:0;width:8px;height:470px;background:linear-gradient(#536d97 -10.3px,#56709a 18.1px,#5a7299 36.3px,#62799f 69.8px,#6a84ac 95.1px,#7490bc 121.5px,#86a4cc 146.8px,#98b8e0 180.6px,#a8c8ec 195.4px,#c0e0f4 210.0px,#dcf8fc 221.8px,#e8fefe 230.8px,#e0f0f0 238.6px,#b8c4c4 244.2px,#8c8c8a 249.7px,#726a66 254.2px,#6b635e 257.5px)"></div>
<div class="a" style="left:664px;top:0;width:8px;height:470px;background:linear-gradient(#536d97 -10.5px,#56709a 17.9px,#5a7299 36.1px,#62799f 69.6px,#6a84ac 95.0px,#7490bc 121.4px,#86a4cc 146.7px,#98b8e0 180.5px,#a8c8ec 195.3px,#c0e0f4 209.8px,#dcf8fc 221.8px,#e8fefe 230.8px,#e0f0f0 238.6px,#b8c4c4 244.2px,#8c8c8a 249.8px,#726a66 254.3px,#6b635e 257.7px)"></div>
<div class="a" style="left:672px;top:0;width:8px;height:470px;background:linear-gradient(#536d97 -10.8px,#56709a 17.7px,#5a7299 35.9px,#62799f 69.5px,#6a84ac 94.9px,#7490bc 121.3px,#86a4cc 146.7px,#98b8e0 180.3px,#a8c8ec 195.1px,#c0e0f4 209.7px,#dcf8fc 221.7px,#e8fefe 230.7px,#e0f0f0 238.7px,#b8c4c4 244.3px,#8c8c8a 250.0px,#726a66 254.5px,#6b635e 257.9px)"></div>
<div class="a" style="left:680px;top:0;width:8px;height:470px;background:linear-gradient(#536d97 -11.0px,#56709a 17.4px,#5a7299 35.7px,#62799f 69.3px,#6a84ac 94.7px,#7490bc 121.2px,#86a4cc 146.6px,#98b8e0 180.1px,#a8c8ec 194.9px,#c0e0f4 209.5px,#dcf8fc 221.6px,#e8fefe 230.7px,#e0f0f0 238.7px,#b8c4c4 244.4px,#8c8c8a 250.1px,#726a66 254.7px,#6b635e 258.1px)"></div>
<div class="a" style="left:688px;top:0;width:8px;height:470px;background:linear-gradient(#536d97 -11.3px,#56709a 17.2px,#5a7299 35.5px,#62799f 69.1px,#6a84ac 94.6px,#7490bc 121.0px,#86a4cc 146.5px,#98b8e0 179.9px,#a8c8ec 194.7px,#c0e0f4 209.4px,#dcf8fc 221.5px,#e8fefe 230.7px,#e0f0f0 238.7px,#b8c4c4 244.5px,#8c8c8a 250.2px,#726a66 254.8px,#6b635e 258.3px)"></div>
<div class="a" style="left:696px;top:0;width:8px;height:470px;background:linear-gradient(#536d97 -11.5px,#56709a 17.0px,#5a7299 35.3px,#62799f 69.0px,#6a84ac 94.4px,#7490bc 120.9px,#86a4cc 146.4px,#98b8e0 179.7px,#a8c8ec 194.5px,#c0e0f4 209.2px,#dcf8fc 221.4px,#e8fefe 230.7px,#e0f0f0 238.8px,#b8c4c4 244.6px,#8c8c8a 250.4px,#726a66 255.0px,#6b635e 258.5px)"></div>
<div class="a" style="left:704px;top:0;width:8px;height:470px;background:linear-gradient(#536d97 -11.8px,#56709a 16.8px,#5a7299 35.1px,#62799f 68.8px,#6a84ac 94.3px,#7490bc 120.8px,#86a4cc 146.3px,#98b8e0 179.6px,#a8c8ec 194.3px,#c0e0f4 209.1px,#dcf8fc 221.3px,#e8fefe 230.7px,#e0f0f0 238.8px,#b8c4c4 244.7px,#8c8c8a 250.5px,#726a66 255.2px,#6b635e 258.7px)"></div>
<div class="a" style="left:712px;top:0;width:8px;height:470px;background:linear-gradient(#536d97 -12.1px,#56709a 16.5px,#5a7299 34.9px,#62799f 68.6px,#6a84ac 94.1px,#7490bc 120.7px,#86a4cc 146.2px,#98b8e0 179.4px,#a8c8ec 194.1px,#c0e0f4 208.9px,#dcf8fc 221.2px,#e8fefe 230.6px,#e0f0f0 238.9px,#b8c4c4 244.8px,#8c8c8a 250.6px,#726a66 255.3px,#6b635e 258.9px)"></div>
<div class="a" style="left:720px;top:0;width:8px;height:470px;background:linear-gradient(#536d97 -12.3px,#56709a 16.3px,#5a7299 34.7px,#62799f 68.4px,#6a84ac 94.0px,#7490bc 120.6px,#86a4cc 146.1px,#98b8e0 179.2px,#a8c8ec 193.9px,#c0e0f4 208.7px,#dcf8fc 221.1px,#e8fefe 230.6px,#e0f0f0 238.9px,#b8c4c4 244.9px,#8c8c8a 250.8px,#726a66 255.5px,#6b635e 259.1px)"></div>
<div class="a" style="left:728px;top:0;width:8px;height:470px;background:linear-gradient(#536d97 -12.6px,#56709a 16.0px,#5a7299 34.5px,#62799f 68.2px,#6a84ac 93.8px,#7490bc 120.4px,#86a4cc 146.0px,#98b8e0 179.0px,#a8c8ec 193.7px,#c0e0f4 208.6px,#dcf8fc 221.0px,#e8fefe 230.6px,#e0f0f0 239.0px,#b8c4c4 245.0px,#8c8c8a 250.9px,#726a66 255.7px,#6b635e 259.3px)"></div>
<div class="a" style="left:736px;top:0;width:8px;height:470px;background:linear-gradient(#536d97 -12.9px,#56709a 15.8px,#5a7299 34.2px,#62799f 68.0px,#6a84ac 93.7px,#7490bc 120.3px,#86a4cc 145.9px,#98b8e0 178.8px,#a8c8ec 193.5px,#c0e0f4 208.4px,#dcf8fc 220.9px,#e8fefe 230.6px,#e0f0f0 239.0px,#b8c4c4 245.1px,#8c8c8a 251.1px,#726a66 255.9px,#6b635e 259.5px)"></div>
<div class="a" style="left:744px;top:0;width:8px;height:470px;background:linear-gradient(#536d97 -13.2px,#56709a 15.5px,#5a7299 34.0px,#62799f 67.8px,#6a84ac 93.5px,#7490bc 120.2px,#86a4cc 145.8px,#98b8e0 178.6px,#a8c8ec 193.2px,#c0e0f4 208.2px,#dcf8fc 220.8px,#e8fefe 230.6px,#e0f0f0 239.1px,#b8c4c4 245.2px,#8c8c8a 251.2px,#726a66 256.1px,#6b635e 259.7px)"></div>
<div class="a" style="left:752px;top:0;width:8px;height:470px;background:linear-gradient(#536d97 -13.5px,#56709a 15.3px,#5a7299 33.7px,#62799f 67.6px,#6a84ac 93.3px,#7490bc 120.0px,#86a4cc 145.7px,#98b8e0 178.3px,#a8c8ec 193.0px,#c0e0f4 208.0px,#dcf8fc 220.7px,#e8fefe 230.5px,#e0f0f0 239.1px,#b8c4c4 245.3px,#8c8c8a 251.4px,#726a66 256.3px,#6b635e 260.0px)"></div>
<div class="a" style="left:760px;top:0;width:8px;height:470px;background:linear-gradient(#536d97 -13.8px,#56709a 15.0px,#5a7299 33.5px,#62799f 67.4px,#6a84ac 93.1px,#7490bc 119.9px,#86a4cc 145.6px,#98b8e0 178.1px,#a8c8ec 192.8px,#c0e0f4 207.8px,#dcf8fc 220.6px,#e8fefe 230.5px,#e0f0f0 239.2px,#b8c4c4 245.4px,#8c8c8a 251.5px,#726a66 256.5px,#6b635e 260.2px)"></div>
<div class="a" style="left:768px;top:0;width:8px;height:470px;background:linear-gradient(#536d97 -14.1px,#56709a 14.7px,#5a7299 33.3px,#62799f 67.2px,#6a84ac 93.0px,#7490bc 119.7px,#86a4cc 145.5px,#98b8e0 177.9px,#a8c8ec 192.5px,#c0e0f4 207.7px,#dcf8fc 220.5px,#e8fefe 230.5px,#e0f0f0 239.2px,#b8c4c4 245.5px,#8c8c8a 251.7px,#726a66 256.7px,#6b635e 260.4px)"></div>
<div class="a" style="left:776px;top:0;width:8px;height:470px;background:linear-gradient(#536d97 -14.4px,#56709a 14.5px,#5a7299 33.0px,#62799f 67.0px,#6a84ac 92.8px,#7490bc 119.6px,#86a4cc 145.4px,#98b8e0 177.7px,#a8c8ec 192.3px,#c0e0f4 207.5px,#dcf8fc 220.4px,#e8fefe 230.5px,#e0f0f0 239.3px,#b8c4c4 245.6px,#8c8c8a 251.9px,#726a66 256.9px,#6b635e 260.7px)"></div>
<div class="a" style="left:784px;top:0;width:8px;height:470px;background:linear-gradient(#536d97 -14.7px,#56709a 14.2px,#5a7299 32.8px,#62799f 66.8px,#6a84ac 92.6px,#7490bc 119.5px,#86a4cc 145.3px,#98b8e0 177.5px,#a8c8ec 192.1px,#c0e0f4 207.3px,#dcf8fc 220.3px,#e8fefe 230.5px,#e0f0f0 239.3px,#b8c4c4 245.7px,#8c8c8a 252.0px,#726a66 257.1px,#6b635e 260.9px)"></div>
<div class="a" style="left:792px;top:0;width:8px;height:470px;background:linear-gradient(#536d97 -15.0px,#56709a 13.9px,#5a7299 32.5px,#62799f 66.6px,#6a84ac 92.4px,#7490bc 119.3px,#86a4cc 145.1px,#98b8e0 177.2px,#a8c8ec 191.8px,#c0e0f4 207.1px,#dcf8fc 220.2px,#e8fefe 230.4px,#e0f0f0 239.4px,#b8c4c4 245.8px,#8c8c8a 252.2px,#726a66 257.3px,#6b635e 261.1px)"></div>
<div class="a" style="left:800px;top:0;width:8px;height:470px;background:linear-gradient(#536d97 -15.4px,#56709a 13.6px,#5a7299 32.2px,#62799f 66.4px,#6a84ac 92.3px,#7490bc 119.2px,#86a4cc 145.0px,#98b8e0 177.0px,#a8c8ec 191.6px,#c0e0f4 206.9px,#dcf8fc 220.1px,#e8fefe 230.4px,#e0f0f0 239.5px,#b8c4c4 245.9px,#8c8c8a 252.4px,#726a66 257.5px,#6b635e 261.4px)"></div>
<div class="a" style="left:808px;top:0;width:8px;height:470px;background:linear-gradient(#536d97 -15.7px,#56709a 13.3px,#5a7299 32.0px,#62799f 66.2px,#6a84ac 92.1px,#7490bc 119.0px,#86a4cc 144.9px,#98b8e0 176.8px,#a8c8ec 191.3px,#c0e0f4 206.7px,#dcf8fc 220.0px,#e8fefe 230.4px,#e0f0f0 239.5px,#b8c4c4 246.0px,#8c8c8a 252.5px,#726a66 257.7px,#6b635e 261.6px)"></div>
<div class="a" style="left:816px;top:0;width:8px;height:470px;background:linear-gradient(#536d97 -16.0px,#56709a 13.0px,#5a7299 31.7px,#62799f 65.9px,#6a84ac 91.9px,#7490bc 118.9px,#86a4cc 144.8px,#98b8e0 176.5px,#a8c8ec 191.0px,#c0e0f4 206.5px,#dcf8fc 219.9px,#e8fefe 230.4px,#e0f0f0 239.6px,#b8c4c4 246.1px,#8c8c8a 252.7px,#726a66 258.0px,#6b635e 261.9px)"></div>
<div class="a" style="left:824px;top:0;width:8px;height:470px;background:linear-gradient(#536d97 -16.4px,#56709a 12.7px,#5a7299 31.4px,#62799f 65.7px,#6a84ac 91.7px,#7490bc 118.7px,#86a4cc 144.7px,#98b8e0 176.3px,#a8c8ec 190.8px,#c0e0f4 206.3px,#dcf8fc 219.7px,#e8fefe 230.3px,#e0f0f0 239.6px,#b8c4c4 246.3px,#8c8c8a 252.9px,#726a66 258.2px,#6b635e 262.2px)"></div>
<div class="a" style="left:832px;top:0;width:6px;height:470px;background:linear-gradient(#536d97 -16.7px,#56709a 12.5px,#5a7299 31.2px,#62799f 65.5px,#6a84ac 91.5px,#7490bc 118.6px,#86a4cc 144.6px,#98b8e0 176.1px,#a8c8ec 190.6px,#c0e0f4 206.1px,#dcf8fc 219.6px,#e8fefe 230.3px,#e0f0f0 239.7px,#b8c4c4 246.4px,#8c8c8a 253.0px,#726a66 258.4px,#6b635e 262.4px)"></div>
<div class="a" style="left:0;top:0;width:838px;height:225px;background:linear-gradient(to right, rgba(180,210,245,0.10), rgba(180,210,245,0) 40%);-webkit-mask-image:linear-gradient(#000 60%,transparent)"></div>
<div class="a" style="left:0;top:0;width:838px;height:240px;background:radial-gradient(ellipse 560px 300px at 470px -20px, rgba(150,180,220,0) 0%, rgba(150,180,220,0) 45%, rgba(150,180,220,0.22) 100%);-webkit-mask-image:linear-gradient(#000 30%,transparent)"></div>
</div>

<!-- ============ INSPECTOR ============ -->
<div class="strip" style="left:1140px;top:1px;width:411px;height:29px;border-radius:6px 0 0 0"></div>
<div class="tab" style="left:1140px;top:1px;width:143px;height:29px;border-radius:6px 6px 0 0"></div>
<div class="a" style="left:1140px;top:1px;width:143px;height:3px;background:#3a74b4;border-radius:6px 6px 0 0"></div>
<div class="a" style="left:1140px;top:30px;width:411px;height:931px;background:#383838"></div>
<div class="a" style="left:1140px;top:30px;width:411px;height:1px;background:#232323"></div>
<div class="a" style="left:1140px;top:31px;width:411px;height:88px;background:#3e3e3e"></div>
<div class="a" style="left:1140px;top:119px;width:411px;height:1px;background:#202020"></div>
<div class="a" style="left:1140px;top:120px;width:411px;height:31px;background:#3e3e3e"></div>
<div class="a" style="left:1140px;top:151px;width:411px;height:1px;background:#2d2d2d"></div>
<div class="a" style="left:1140px;top:259px;width:411px;height:1px;background:#1f1f1f"></div>
<div class="a" style="left:1140px;top:260px;width:411px;height:31px;background:#3e3e3e"></div>
<div class="a" style="left:1140px;top:291px;width:411px;height:1px;background:#2d2d2d"></div>
<div class="a" style="left:1140px;top:368px;width:411px;height:2px;background:#1f1f1f"></div>
<!-- header fields -->
<div class="fld" style="left:1240.5px;top:44px;width:202.5px;height:27px;border-radius:4px"></div>
<div class="dd" style="left:1244px;top:81px;width:119px;height:25.5px"></div>
<div class="dd" style="left:1441px;top:80.7px;width:102px;height:25.7px"></div>
<!-- transform fields -->
<div class="fld" style="left:1283.3px;top:158px;width:70.3px;height:26.3px"></div>
<div class="fld" style="left:1378.6px;top:158px;width:69.7px;height:26.3px"></div>
<div class="fld" style="left:1474.3px;top:158px;width:70.3px;height:26.3px"></div>
<div class="fld" style="left:1283.3px;top:188.4px;width:70.3px;height:26px"></div>
<div class="fld" style="left:1378.6px;top:188.4px;width:69.7px;height:26px"></div>
<div class="fld" style="left:1474.3px;top:188.4px;width:70.3px;height:26px"></div>
<div class="fld" style="left:1283.3px;top:218.4px;width:70.3px;height:26px"></div>
<div class="fld" style="left:1378.6px;top:218.4px;width:69.7px;height:26px"></div>
<div class="fld" style="left:1474.3px;top:218.4px;width:70.3px;height:26px"></div>
<!-- script fields -->
<div class="fld" style="left:1351.6px;top:298.8px;width:192.4px;height:25.2px;background:#2e2e2e;border-color:#262626;border-radius:4px"></div>
<div class="a" style="left:1515.5px;top:299.8px;width:27.5px;height:23.2px;background:#323232;border-radius:0 3px 3px 0"></div>
<div class="fld" style="left:1351.6px;top:328.8px;width:192.4px;height:25.2px;border-radius:4px"></div>
<div class="a" style="left:1515.5px;top:329.8px;width:27.5px;height:23.2px;background:#353535;border-radius:0 3px 3px 0"></div>
<!-- add component -->
<div class="a" style="left:1175px;top:383px;width:343px;height:34.4px;background:#585858;border:1px solid #303030;border-top-color:#656565;border-radius:4px"></div>

<!-- ============ PROJECT ============ -->
<div class="strip" style="left:0;top:706px;width:1137px;height:29px;border-radius:0 6px 0 0"></div>
<div class="tab" style="left:0;top:706px;width:118px;height:29px;border-radius:0 6px 0 0"></div>
<div class="tb" style="left:0;top:735px;width:1137px;height:31px"></div>
<div class="fld" style="left:515px;top:738.4px;width:450px;height:23.2px;border-radius:5px;border-color:#1c1c1c;border-top-color:#0c0c0c"></div>
<div class="sep" style="left:968px;top:735px;width:2px;height:31px;background:#232323"></div>
<div class="sep" style="left:1007px;top:735px;width:2px;height:31px;background:#232323"></div>
<div class="sep" style="left:1046px;top:735px;width:2px;height:31px;background:#232323"></div>
<div class="sep" style="left:1085px;top:735px;width:2px;height:31px;background:#232323"></div>
<div class="a" style="left:0;top:766px;width:170px;height:195px;background:#383838"></div>
<div class="a" style="left:0;top:861px;width:170px;height:24px;background:#4b4b4b"></div>
<div class="a" style="left:170px;top:766px;width:1.5px;height:195px;background:#232323"></div>
<div class="a" style="left:171.5px;top:766px;width:965.5px;height:195px;background:#333333"></div>
<div class="a" style="left:171.5px;top:766px;width:965.5px;height:31px;background:#3e3e3e"></div>
<div class="a" style="left:171.5px;top:797px;width:965.5px;height:1px;background:#2a2a2a"></div>

<div class="t" style="left:31.2px;top:7.8px;font-size:18px;letter-spacing:1.04px;color:#cfcfcf">Hierarchy</div>
<div class="t" style="left:91.5px;top:37.4px;font-size:16px;letter-spacing:0.9px;color:#7f7f7f">All</div>
<div class="t" style="left:94.7px;top:62.8px;font-size:18px;letter-spacing:1.15px;color:#dedede;font-weight:bold">Untitled*</div>
<div class="t" style="left:114.5px;top:86.8px;font-size:18px;letter-spacing:0.8px;color:#d2d2d2">Main Camera</div>
<div class="t" style="left:114.5px;top:110.8px;font-size:18px;letter-spacing:1.03px;color:#d2d2d2">Directional Light</div>
<div class="t" style="left:114.5px;top:134.8px;font-size:18px;letter-spacing:0.81px;color:#d2d2d2">PeterCube</div>
<div class="t" style="left:115.5px;top:158.8px;font-size:18px;letter-spacing:0.78px;color:#d2d2d2">ZugriffsGameObject</div>
<div class="t" style="left:335.1px;top:7.8px;font-size:18px;letter-spacing:0.93px;color:#cfcfcf">Scene</div>
<div class="t" style="left:454.1px;top:7.8px;font-size:18px;letter-spacing:0.17px;color:#cfcfcf">Game</div>
<div class="t" style="left:568.9px;top:7.8px;font-size:18px;letter-spacing:0.29px;color:#cfcfcf">Asset Store</div>
<div class="t" style="left:304.3px;top:37.0px;font-size:18px;letter-spacing:0.69px;color:#d2d2d2">Display 1</div>
<div class="t" style="left:424.3px;top:37.0px;font-size:18px;letter-spacing:0.78px;color:#d2d2d2">1080p (1920x1080)</div>
<div class="t" style="left:669.3px;top:37.0px;font-size:18px;letter-spacing:1.1px;color:#d2d2d2">Scale</div>
<div class="t" style="left:784.7px;top:37.0px;font-size:18px;letter-spacing:1.43px;color:#d2d2d2">0.44x</div>
<div class="t" style="left:852.7px;top:37.0px;font-size:18px;letter-spacing:0.62px;color:#d2d2d2">Maximize On Play</div>
<div class="t" style="left:1024.6px;top:37.0px;font-size:18px;letter-spacing:1.04px;color:#d2d2d2">Mute Audio</div>
<div class="t" style="left:1175.6px;top:7.8px;font-size:18px;letter-spacing:0.93px;color:#cfcfcf">Inspector</div>
<div class="t" style="left:1244.8px;top:49.8px;font-size:18px;letter-spacing:0.78px;color:#e0e0e0;font-weight:bold">ZugriffsGameObject</div>
<div class="t" style="left:1474px;top:49.3px;font-size:18px;letter-spacing:1.1px;color:#d2d2d2">Static</div>
<div class="t" style="left:1205.3px;top:84.8px;font-size:18px;letter-spacing:2.1px;color:#d2d2d2">Tag</div>
<div class="t" style="left:1248.8px;top:84.8px;font-size:18px;letter-spacing:1.29px;color:#d2d2d2">Untagged</div>
<div class="t" style="left:1383.5px;top:84.8px;font-size:18px;letter-spacing:1.38px;color:#d2d2d2">Layer</div>
<div class="t" style="left:1445px;top:84.8px;font-size:18px;letter-spacing:1.42px;color:#d2d2d2">Default</div>
<div class="t" style="left:1232px;top:126.8px;font-size:18px;letter-spacing:0.97px;color:#dedede;font-weight:bold">Transform</div>
<div class="t" style="left:1168.3px;top:162.8px;font-size:18px;letter-spacing:0.91px;color:#d2d2d2">Position</div>
<div class="t" style="left:1168.3px;top:192.8px;font-size:18px;letter-spacing:0.96px;color:#d2d2d2">Rotation</div>
<div class="t" style="left:1168.3px;top:222.8px;font-size:18px;letter-spacing:1.07px;color:#d2d2d2">Scale</div>
<div class="t" style="left:1266.4px;top:162.8px;font-size:18px;letter-spacing:0px;color:#d2d2d2">X</div>
<div class="t" style="left:1363px;top:162.8px;font-size:18px;letter-spacing:0px;color:#d2d2d2">Y</div>
<div class="t" style="left:1456.9px;top:162.8px;font-size:18px;letter-spacing:0px;color:#d2d2d2">Z</div>
<div class="t" style="left:1266.4px;top:192.8px;font-size:18px;letter-spacing:0px;color:#d2d2d2">X</div>
<div class="t" style="left:1363px;top:192.8px;font-size:18px;letter-spacing:0px;color:#d2d2d2">Y</div>
<div class="t" style="left:1456.9px;top:192.8px;font-size:18px;letter-spacing:0px;color:#d2d2d2">Z</div>
<div class="t" style="left:1266.4px;top:222.8px;font-size:18px;letter-spacing:0px;color:#d2d2d2">X</div>
<div class="t" style="left:1363px;top:222.8px;font-size:18px;letter-spacing:0px;color:#d2d2d2">Y</div>
<div class="t" style="left:1456.9px;top:222.8px;font-size:18px;letter-spacing:0px;color:#d2d2d2">Z</div>
<div class="t" style="left:1286.4px;top:162.8px;font-size:18px;letter-spacing:1.5px;color:#d2d2d2">960</div>
<div class="t" style="left:1382px;top:162.8px;font-size:18px;letter-spacing:2.0px;color:#d2d2d2">540</div>
<div class="t" style="left:1478.3px;top:162.8px;font-size:18px;letter-spacing:0.8px;color:#d2d2d2">0</div>
<div class="t" style="left:1287.4px;top:192.8px;font-size:18px;letter-spacing:0.8px;color:#d2d2d2">0</div>
<div class="t" style="left:1383px;top:192.8px;font-size:18px;letter-spacing:0.8px;color:#d2d2d2">0</div>
<div class="t" style="left:1478.3px;top:192.8px;font-size:18px;letter-spacing:0.8px;color:#d2d2d2">0</div>
<div class="t" style="left:1287.4px;top:222.8px;font-size:18px;letter-spacing:0.8px;color:#d2d2d2">1</div>
<div class="t" style="left:1383px;top:222.8px;font-size:18px;letter-spacing:0.8px;color:#d2d2d2">1</div>
<div class="t" style="left:1478.3px;top:222.8px;font-size:18px;letter-spacing:0.8px;color:#d2d2d2">1</div>
<div class="t" style="left:1232px;top:267.7px;font-size:18px;letter-spacing:0.81px;color:#dedede;font-weight:bold">Zugriffs Script (Script)</div>
<div class="t" style="left:1168.8px;top:303.6px;font-size:18px;letter-spacing:1.0px;color:#858585">Script</div>
<div class="t" style="left:1375px;top:303.6px;font-size:18px;letter-spacing:0.77px;color:#858585">ZugriffsScript</div>
<div class="t" style="left:1168.8px;top:333.6px;font-size:18px;letter-spacing:0.97px;color:#d2d2d2">Mein Zugriff</div>
<div class="t" style="left:1355px;top:333.6px;font-size:18px;letter-spacing:0.68px;color:#e4e4e4">None (Peter)</div>
<div class="t" style="left:1276.8px;top:391.1px;font-size:18px;letter-spacing:0.77px;color:#e4e4e4">Add Component</div>
<div class="t" style="left:31.6px;top:712.8px;font-size:18px;letter-spacing:1.0px;color:#cfcfcf">Project</div>
<div class="t" style="left:156.5px;top:712.8px;font-size:18px;letter-spacing:0.83px;color:#cfcfcf">Console</div>
<div class="t" style="left:49.5px;top:768.0px;font-size:18px;letter-spacing:0.71px;color:#dedede;font-weight:bold">Favorites</div>
<div class="t" style="left:50.5px;top:815.0px;font-size:18px;letter-spacing:0.96px;color:#dedede;font-weight:bold">Assets</div>
<div class="t" style="left:69.6px;top:839.3px;font-size:18px;letter-spacing:0.96px;color:#d2d2d2">Scenes</div>
<div class="t" style="left:69.6px;top:863.3px;font-size:18px;letter-spacing:0.87px;color:#d2d2d2">Scripts</div>
<div class="a" style="left:0;top:883.3px;width:170px;height:26px;overflow:hidden"><div class="t" style="left:71.1px;top:4px;font-size:18px;letter-spacing:0.8px;color:#d2d2d2">TextMesh Pro</div></div>
<div class="t" style="left:49.2px;top:911.3px;font-size:18px;letter-spacing:0.9px;color:#dedede;font-weight:bold">Packages</div>
<div class="t" style="left:178.6px;top:772.7px;font-size:18px;letter-spacing:0.12px;color:#c4c4c4">Assets</div>
<div class="t" style="left:261.1px;top:772.7px;font-size:18px;letter-spacing:0.65px;color:#dedede;font-weight:bold">Scripts</div>
<div class="t" style="left:221.6px;top:914.1px;font-size:14px;letter-spacing:1.2px;color:#d2d2d2">Peter</div>
<div class="t" style="left:310.9px;top:914.1px;font-size:14px;letter-spacing:0.95px;color:#d2d2d2">ZugriffsScr...</div>
<div class="t" style="left:1119px;top:742.5px;font-size:17px;letter-spacing:0px;color:#d2d2d2">9</div>
<svg class="a" style="left:0;top:0;position:absolute" width="1551" height="961" viewBox="0 0 1551 961">
<defs>
 <path id="cube" d="M99.3 87.2L108.7 91.3V102.6L99.3 107.2L90.2 102.6V91.3ZM90.2 91.3L99.3 96.2L108.7 91.3M99.3 96.2V107.2"/>
 <g id="kebab"><circle cx="0" cy="0" r="1.6"/><circle cx="0" cy="5.7" r="1.6"/><circle cx="0" cy="11.3" r="1.6"/></g>
 <g id="lock"><rect x="0.9" y="8.8" width="10.4" height="5.6" stroke-width="1.8" fill="none"/><path d="M9.8 8V3.5Q9.8 0.6 6.1 0.3Q3.6 0.3 2.3 2.6" stroke-width="2" fill="none"/></g>
 <g id="presets"><rect x="0" y="3" width="14" height="1.4"/><rect x="8.5" y="0" width="2.6" height="7"/><rect x="0" y="10.2" width="1.6" height="1.4"/><rect x="4" y="10.2" width="10" height="1.4"/><rect x="4.2" y="7.4" width="2.6" height="6.6"/></g>
 <g id="help"><circle cx="0" cy="0" r="7"/><path d="M-2.6 -1.6Q-2.6 -4.6 0 -4.6Q2.8 -4.6 2.8 -2Q2.8 -0.4 1 0.4Q0 0.9 0 2.2" stroke="#3e3e3e" stroke-width="2" fill="none"/><circle cx="0" cy="4.4" r="1.2" fill="#3e3e3e"/></g>
 <g id="folder"><path d="M0 1.2Q0 0 1.2 0H6.6L8.6 2.6H17.2Q18.4 2.6 18.4 3.8V12.8Q18.4 14 17.2 14H1.2Q0 14 0 12.8Z"/></g>
</defs>
<g fill="#c4c4c4" stroke="none">
 <!-- hierarchy list icon -->
 <circle cx="10.2" cy="10.6" r="1.3"/><rect x="13" y="10" width="11" height="1.2"/>
 <circle cx="13.3" cy="15.2" r="1.3"/><rect x="16" y="14.7" width="8" height="1.2"/>
 <circle cx="13.3" cy="19.6" r="1.3"/><rect x="16" y="19" width="8" height="1.2"/>
 <!-- plus + arrow -->
 <rect x="8" y="43.8" width="18" height="2"/><rect x="16" y="36" width="2" height="18"/>
 <path d="M33 42h10l-5 6z"/>
 <!-- kebabs -->
 <use href="#kebab" x="277.2" y="9"/>
 <use href="#kebab" x="278.2" y="66.5"/>
 <use href="#kebab" x="1118" y="9.5"/>
 <use href="#kebab" x="1530.5" y="9.5"/>
 <use href="#kebab" x="1531" y="129.1"/>
 <use href="#kebab" x="1531" y="270"/>
 <use href="#kebab" x="1118" y="714"/>
 <!-- project plus -->
 <rect x="7.6" y="748.7" width="18.7" height="2"/><rect x="16" y="740.4" width="2" height="18.6"/>
 <path d="M33 747.5h10l-5 5.5z"/>
 <!-- game dropdown arrows -->
 <path d="M402 42h10.3l-5.15 6.3z"/>
 <path d="M641.6 42h10.4l-5.2 6.3z"/>
 <!-- inspector arrows -->
 <path d="M1181 77.5h10l-5 5.5z"/>
 <path d="M1529.3 54h10.7l-5.35 6z"/>
 <path d="M1344 89.5h10.4l-5.2 5.8z"/>
 <path d="M1524 89.5h10.7l-5.35 5.8z"/>
 <!-- help -->
 <use href="#help" x="1471" y="135"/>
 <use href="#help" x="1471" y="276"/>
 <!-- presets -->
 <use href="#presets" x="1494" y="127.8"/>
 <use href="#presets" x="1494" y="268.6"/>
 <!-- info icon -->
 <circle cx="1160.8" cy="16.2" r="7.2"/>
 <!-- gamepad -->
 <path d="M433.6 11.9H444.2Q449.1 11.9 449.1 16.6Q449.1 22.2 445.6 22.2Q443.8 22.2 442.6 20.6H435.3Q434.1 22.2 432.3 22.2Q428.8 22.2 428.8 16.6Q428.8 11.9 433.6 11.9Z"/>
 <!-- bag -->
 <rect x="545.7" y="11.9" width="14.4" height="12.9" rx="2"/>
 <!-- slider -->
 <rect x="737" y="46" width="38" height="1.5" fill="#808080"/>
 <circle cx="737.5" cy="46.7" r="6.8" fill="#a8a8a8"/>
 <!-- project tab folder -->
 <use href="#folder" transform="translate(7.6,714.5) scale(0.98,0.96)"/>
 <!-- console icon -->
 <rect x="135" y="712.2" width="13.8" height="15.8" rx="1"/>
 <!-- folders tree -->
 <use href="#folder" transform="translate(45.7,841.7)"/>
 <use href="#folder" transform="translate(45.7,865.7)"/>
 <use href="#folder" transform="translate(45.7,889.6)"/>
 <use href="#folder" transform="translate(24.8,913.9) scale(0.98,1)"/>
 <!-- toolbar icons -->
 <rect x="981" y="740" width="8" height="8.7"/>
 <circle cx="984.2" cy="753.3" r="5.1"/>
 <path d="M993.5 744.5L998.2 753H989.5Z"/>
 <path d="M1025.8 742.9H1033V750.3L1025.2 757.4Q1024.6 757.9 1024 757.3L1018.3 751.6Q1017.8 751 1018.4 750.4Z"/>
 <path d="M1065.8 741.8L1068.3 747.3L1074.8 747.8L1069.8 752.3L1071.3 758.3L1065.8 755.1L1060.3 758.3L1061.8 752.3L1056.8 747.8L1063.3 747.3Z" fill="#8a8a8a"/>
</g>
<g fill="#383838">
 <!-- info i -->
 <circle cx="1160.8" cy="11.9" r="1.5" fill="#3c3c3c"/>
 <rect x="1159.5" y="14.6" width="2.7" height="6.6" rx="0.8" fill="#3c3c3c"/>
 <!-- gamepad holes -->
 <rect x="430.6" y="16" width="5.2" height="1.9" fill="#3c3c3c"/>
 <rect x="432.25" y="14.35" width="1.9" height="5.2" fill="#3c3c3c"/>
 <circle cx="444.4" cy="15.2" r="1.45" fill="#3c3c3c"/>
 <circle cx="441.3" cy="18.3" r="1.45" fill="#3c3c3c"/>
 <circle cx="549.6" cy="14.6" r="1" fill="#282828"/>
 <circle cx="556.6" cy="14.6" r="1" fill="#282828"/>
 <!-- tag hole -->
 <circle cx="1030" cy="745.8" r="1.2" fill="#3c3c3c"/>
</g>
<g fill="none" stroke="#c4c4c4">
 <use href="#lock" x="244.9" y="7"/>
 <use href="#lock" x="1497.7" y="7.5"/>
 <use href="#lock" x="1086" y="712.2"/>
 <!-- bag handle -->
 <path d="M549.6 11.5V9Q549.6 7.7 550.9 7.7H555.3Q556.6 7.7 556.6 9V11.5" stroke-width="1.5"/>
 <!-- search -->
 <circle cx="73.2" cy="44.2" r="3.2" stroke-width="1.3"/><path d="M75.6 46.8L78.5 50" stroke-width="1.5"/>
 <circle cx="526" cy="749.2" r="3.1" stroke-width="1.5"/><path d="M528.2 751.5L531.2 754.5" stroke-width="1.9"/>
 <!-- scene grid icon -->
 <path d="M314.5 8.9V21.9M319.4 7V22.8M323.6 8.9V21.9M312.9 10.5H325.9M311 15.4H327.1M312.9 19.6H325.9" stroke-width="1.3"/>
 <!-- console lines -->
 <!-- eye -->
 <path d="M1095.6 749.2Q1106 738.5 1116.4 749.2Q1106 759.8 1095.6 749.2Z" stroke-width="1.5"/>
 <path d="M1097 757.3L1114.5 740.7" stroke-width="1.8"/>
 <path d="M1102.5 751.5A3.6 3.6 0 0 1 1108.8 746.2" stroke-width="2.6"/>
 <!-- picker icons -->
 <circle cx="1529.8" cy="311.8" r="6" stroke-width="1.3" stroke="#8a8a8a"/>
 <circle cx="1529.8" cy="341.8" r="6" stroke-width="1.3"/>
 <!-- chevron -->
 <path d="M245.5 775.8L251.2 781.3L245.5 786.8" stroke="#8a8a8a" stroke-width="1.5"/>
</g>
<circle cx="1529.8" cy="311.8" r="2" fill="#8a8a8a"/>
<circle cx="1529.8" cy="341.8" r="2" fill="#c4c4c4"/>
<g fill="#383838">
 <rect x="137.5" y="715.5" width="8.5" height="1.3"/>
 <rect x="137.5" y="719" width="8.5" height="1.3"/>
 <rect x="137.5" y="722.5" width="8.5" height="1.3"/>
 <rect x="137.5" y="725.2" width="8.5" height="1.2"/>
</g>
<!-- star + open folder -->
<path d="M33.8 769.4L36.1 774.6L42.9 775.4L37.8 779.8L39.6 785.6L33.8 782.4L28 785.6L29.8 779.8L25 775.4L31.5 774.6Z" fill="#ffc000"/>
<path d="M25.8 831V818.8H31.2L33.6 821.7H42.4V824" fill="none" stroke="#c4c4c4" stroke-width="1.4"/>
<path d="M29.5 824.2H45.6L43.5 831.8H25.2Z" fill="#c4c4c4"/>
<!-- triangles -->
<g fill="#7a7a7a">
 <path d="M49.2 67.8h12.4l-6.2 11.7z"/>
 <path d="M1150 130h12.8l-6.4 11.3z"/>
 <path d="M1150 270.9h12.8l-6.4 11.6z"/>
 <path d="M5.2 771L16.8 777.7L5.2 784.4z"/>
 <path d="M4 819.8h12.8l-6.4 11.6z"/>
 <path d="M26.5 890.8L37.8 897.1L26.5 903.4z"/>
 <path d="M5.4 914.7L16.7 921L5.4 927.4z"/>
</g>
<!-- unity logo -->
<g fill="none" stroke="#e0e0e0" stroke-width="1.9" stroke-linejoin="round">
 <path d="M69.6 72Q75.5 66.2 84.8 63.8Q87.2 72 84.8 80.6Q75.5 78 69.6 72Z"/>
 <path d="M70.5 72H79.6L83.8 65.4M79.6 72L83.8 78.8"/>
</g>
<!-- cubes -->
<g fill="none" stroke="#c8c8c8" stroke-width="1.45" stroke-linejoin="round">
 <use href="#cube"/><use href="#cube" y="24"/><use href="#cube" y="48"/><use href="#cube" y="72"/>
 <path d="M1166.5 47.5L1181 54.5V71.5L1166.5 78.5L1152.3 71.5V54.5ZM1152.3 54.5L1166.5 61.5L1181 54.5M1166.5 61.5V78.5" stroke-width="1.8"/>
</g>
<!-- checkboxes -->
<rect x="1210.5" y="47" width="20" height="21" rx="3" fill="#2a2a2a" stroke="#1e1e1e"/>
<path d="M1215 57.5L1219 61.5L1226 53.5" fill="none" stroke="#e8e8e8" stroke-width="2"/>
<rect x="1448.6" y="47" width="20" height="20.6" rx="3" fill="#2a2a2a" stroke="#1e1e1e"/>
<rect x="1201.1" y="265" width="20.5" height="21" rx="3" fill="#2a2a2a" stroke="#1e1e1e"/>
<path d="M1205.7 275.5L1209.8 279.5L1217 271.5" fill="none" stroke="#e8e8e8" stroke-width="2"/>
<!-- transform icon -->
<g stroke-linecap="round" stroke-width="3.4" fill="none">
 <path d="M1183 128V133.8" stroke="#a5ee4e"/>
 <path d="M1176 141.2L1180.4 138.6" stroke="#64c4ff"/>
 <path d="M1186.4 138L1190.8 140.6" stroke="#ff6b3b"/>
</g>
<!-- script icons -->
<g>
 <path d="M1174 265.8H1187.5L1192 270.3V286H1174Z" fill="#ececec"/>
 <g fill="#236b23"><path d="M1181.2 270.5H1183.2L1181.6 283H1179.6Z"/><path d="M1185.2 270.5H1187.2L1185.6 283H1183.6Z"/><rect x="1177.8" y="273.6" width="10.6" height="2"/><rect x="1177.2" y="278" width="10.6" height="2"/></g>
 <path d="M1357.4 305.2H1367.5L1370.6 308.3V320.2H1357.4Z" fill="#8a8a8a"/>
 <g fill="#2d5a2d"><path d="M1361.8 308.6H1363.2L1362.1 317.8H1360.7Z"/><path d="M1364.8 308.6H1366.2L1365.1 317.8H1363.7Z"/><rect x="1359.6" y="310.9" width="7.8" height="1.4"/><rect x="1359.2" y="314.1" width="7.8" height="1.4"/></g>
</g>
<!-- big script files -->
<g id="bigscript">
 <path d="M210 819H260.4L278.2 836.8V899Q278.2 903 274.2 903H210Q206 903 206 899V823Q206 819 210 819Z" fill="#ebebeb"/>
 <g fill="#236b23">
  <path d="M234.5 837H241L234.5 889H228Z"/>
  <path d="M247.8 837H255.3L248 889H241.2Z"/>
  <rect x="222.6" y="849" width="39.4" height="6.6"/>
  <rect x="219.7" y="867.5" width="39.3" height="6.7"/>
 </g>
</g>
<use href="#bigscript" x="113.8"/>
</svg>

<svg class="a" style="left:0;top:0;position:absolute" width="1551" height="961" viewBox="0 0 1551 961">
<g fill="none" stroke="#e31b1b" stroke-width="5.6" stroke-linecap="round" stroke-linejoin="round">
 <!-- vertical arrow from project to hierarchy -->
 <path d="M343 808C343.5 790 343 775 341 755C339 740 334 727 329.8 714.7C323 695 317 684 311 669.7C304 652 298 638 292.4 624.8C284 607 276 593 270 580C259 556 250 530 240 508.7C231 490 223 476 215.6 460C208 444 200 428 194.6 411C190 397 189 390 186.8 379.7C182 357 177 338 174.3 320.4C170 300 168.5 280 168.3 260C168.2 250 168.2 240 168.2 233"/>
 <path d="M168 233L156 226.5L174.5 204Q177.5 201 180.5 205L187.5 228.5Q189 233 184 234.5L172.5 236.3L166 233"/>
 <!-- horizontal curve -->
 <path d="M300.8 169.9H333.3C345 170 350 173 358.6 177C378 183 398 189 416.4 195C430 200 440 204 452.5 207.8C475 216 497 222 517.4 231.2C537 240 553 249 571.6 258.3C595 270 615 283 636.6 294.4C650 301 660 305 672.7 308.8C690 315 705 321 723.2 326.9C750 335 775 341 802.6 346.8C810 348 817 348.6 824.3 348.6H982.5C990 348 993 347.2 997.8 347.1H1030.7C1045 348 1052 352 1061.4 352C1066 352 1070 351.8 1074.6 351.5C1082 350 1088 346 1094.3 345.8C1100 345.5 1106 345.6 1111.2 345.6"/>
 <path d="M1111.9 321.2V337.5Q1112 345 1120.6 360Q1122.5 362 1125 356.2Q1127 353.8 1130.6 352.5L1156.2 336.2L1114.4 328.1"/>
 <!-- underline -->
 <path d="M1346.8 355C1370 354.5 1390 353 1408 352.9C1440 353 1470 354 1501.2 354"/>
</g>
</svg>

</body></html>
